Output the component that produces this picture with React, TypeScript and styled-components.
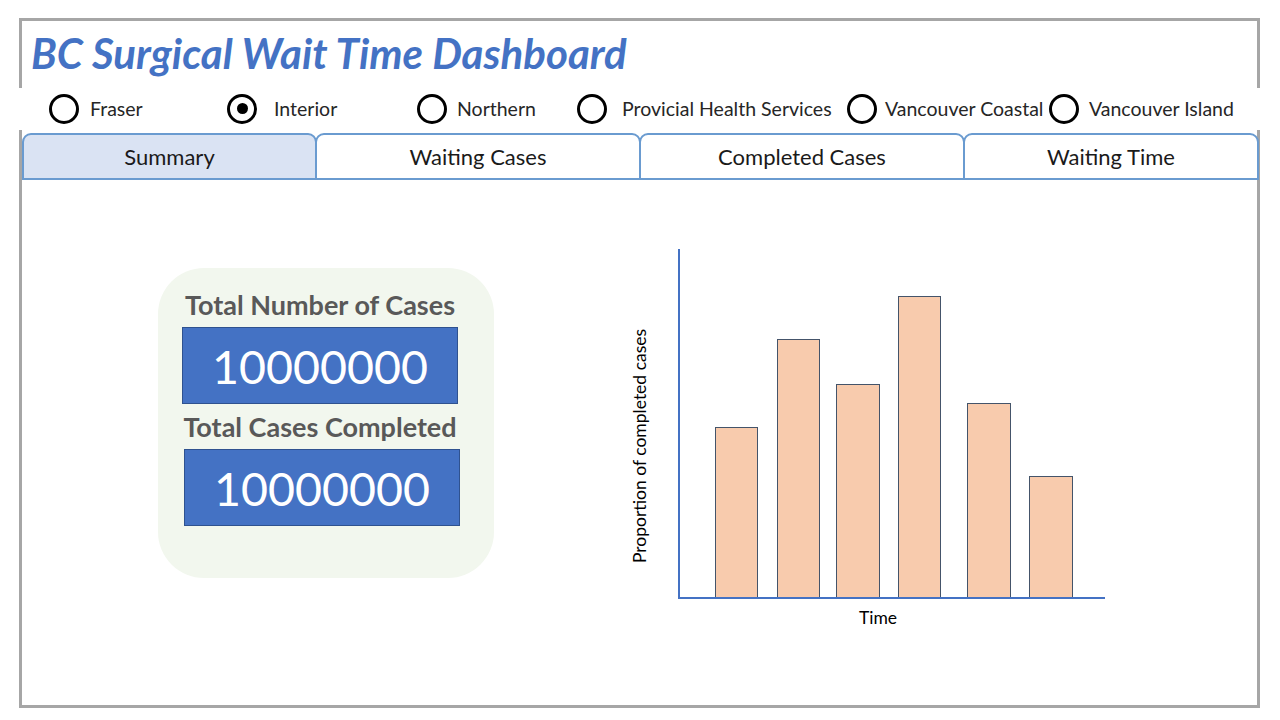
import React from "react";
import styled, { createGlobalStyle } from "styled-components";

const Global = createGlobalStyle`
  html, body { margin: 0; padding: 0; background: #ffffff; }
  body { font-family: Lato, "Open Sans", sans-serif; }
  * { box-sizing: border-box; }
`;

const Frame = styled.div`
  margin: 18px 0 0 19px;
  width: 1241px;
  height: 690px;
  border: 3px solid #a6a6a6;
  display: flex;
  flex-direction: column;
`;

const Title = styled.h1`
  margin: 0;
  height: 67px;
  padding: 11px 0 0 9px;
  font-family: Lato, sans-serif;
  font-style: italic;
  font-weight: 700;
  font-size: 42px;
  line-height: 1;
  color: #4472c4;
`;

const RadioRow = styled.div`
  margin: 0 -3px;
  height: 42px;
  background: #ffffff;
  display: flex;
  align-items: center;
  padding-left: 30px;
  padding-bottom: 1px;
`;

const RadioItem = styled.label<{ $w?: number; $gap: number }>`
  display: flex;
  align-items: center;
  gap: ${(p) => p.$gap}px;
  flex: ${(p) => (p.$w ? `0 0 ${p.$w}px` : "1 1 auto")};
  font-size: 19.5px;
  color: #262626;
  font-family: Lato, sans-serif;
  white-space: nowrap;
`;

const Circle = styled.span<{ $on?: boolean }>`
  flex: 0 0 30px;
  width: 30px;
  height: 30px;
  border: 3px solid #000;
  border-radius: 50%;
  display: flex;
  align-items: center;
  justify-content: center;
  &::after {
    content: "";
    display: ${(p) => (p.$on ? "block" : "none")};
    width: 11px;
    height: 11px;
    border-radius: 50%;
    background: #000;
  }
`;

const Tabs = styled.div`
  margin: 3px -2px 0 0;
  display: flex;
  height: 47px;
`;

const Tab = styled.div<{ $w: number; $active?: boolean }>`
  flex: 0 0 ${(p) => p.$w}px;
  border: 2.5px solid #6a9bd0;
  border-radius: 9px 9px 0 0;
  margin-right: -2px;
  background: ${(p) => (p.$active ? "#dae3f3" : "#ffffff")};
  display: flex;
  align-items: center;
  justify-content: center;
  font-size: 22px;
  color: #1a1a1a;
  font-family: Lato, sans-serif;
`;

const Content = styled.div`
  display: flex;
  align-items: flex-start;
  padding: 55px 0 0 136px;
`;

const Card = styled.div`
  margin-top: 33px;
  width: 336px;
  height: 310px;
  border-radius: 46px;
  background: #f2f7ee;
  display: flex;
  flex-direction: column;
  align-items: center;
  padding: 19px 12px 0 0;
`;

const StatLabel = styled.div`
  font-family: Lato, sans-serif;
  font-weight: 700;
  font-size: 27px;
  color: #595959;
  line-height: 36px;
  height: 40px;
  white-space: nowrap;
`;

const StatBox = styled.div<{ $shift: number }>`
  width: 276px;
  height: 77px;
  margin-left: ${(p) => p.$shift}px;
  margin-bottom: 5px;
  background: #4472c4;
  border: 1px solid #2f528f;
  display: flex;
  align-items: center;
  justify-content: center;
  color: #ffffff;
  font-family: Lato, sans-serif;
  font-size: 46.5px;
  padding-top: 1px;
`;

const ChartWrap = styled.div`
  margin-left: 126px;
  width: 500px;
  height: 400px;
`;

const bars = [
  { x: 95, w: 42, top: 192 },
  { x: 157, w: 42, top: 104 },
  { x: 216, w: 43, top: 149 },
  { x: 278, w: 42, top: 61 },
  { x: 347, w: 43, top: 168 },
  { x: 409, w: 43, top: 241 },
];

const radios = [
  { label: "Fraser", w: 178, gap: 11 },
  { label: "Interior", w: 190, gap: 17, on: true },
  { label: "Northern", w: 160, gap: 10 },
  { label: "Provicial Health Services", w: 270, gap: 15 },
  { label: "Vancouver Coastal", w: 202, gap: 8 },
  { label: "Vancouver Island", gap: 10 },
];

const tabs = [
  { label: "Summary", w: 295, active: true },
  { label: "Waiting Cases", w: 326 },
  { label: "Completed Cases", w: 326 },
  { label: "Waiting Time", w: 296 },
];

export default function App() {
  return (
    <>
      <Global />
      <Frame>
        <Title>BC Surgical Wait Time Dashboard</Title>
        <RadioRow>
          {radios.map((r) => (
            <RadioItem key={r.label} $w={r.w} $gap={r.gap}>
              <Circle $on={r.on} />
              {r.label}
            </RadioItem>
          ))}
        </RadioRow>
        <Tabs>
          {tabs.map((t) => (
            <Tab key={t.label} $w={t.w} $active={t.active}>
              {t.label}
            </Tab>
          ))}
        </Tabs>
        <Content>
          <Card>
            <StatLabel>Total Number of Cases</StatLabel>
            <StatBox $shift={0}>10000000</StatBox>
            <StatLabel>Total Cases Completed</StatLabel>
            <StatBox $shift={4}>10000000</StatBox>
          </Card>
          <ChartWrap>
            <svg width="500" height="400" viewBox="0 0 500 400">
              {bars.map((b, i) => (
                <rect
                  key={i}
                  x={b.x + 0.5}
                  y={b.top + 0.5}
                  width={b.w}
                  height={363 - b.top}
                  fill="#f8cbad"
                  stroke="#44546a"
                  strokeWidth="1"
                />
              ))}
              <line x1="59" y1="14" x2="59" y2="364" stroke="#4472c4" strokeWidth="2" />
              <line x1="58" y1="363" x2="485" y2="363" stroke="#4472c4" strokeWidth="2" />
              <text
                x="22"
                y="211"
                transform="rotate(-90 22 211)"
                textAnchor="middle"
                dominantBaseline="middle"
                fontFamily="Lato, sans-serif"
                fontSize="17.5"
                fill="#000"
              >
                Proportion of completed cases
              </text>
              <text x="258" y="389" textAnchor="middle" fontFamily="Lato, sans-serif" fontSize="17.5" fill="#000">
                Time
              </text>
            </svg>
          </ChartWrap>
        </Content>
      </Frame>
    </>
  );
}
